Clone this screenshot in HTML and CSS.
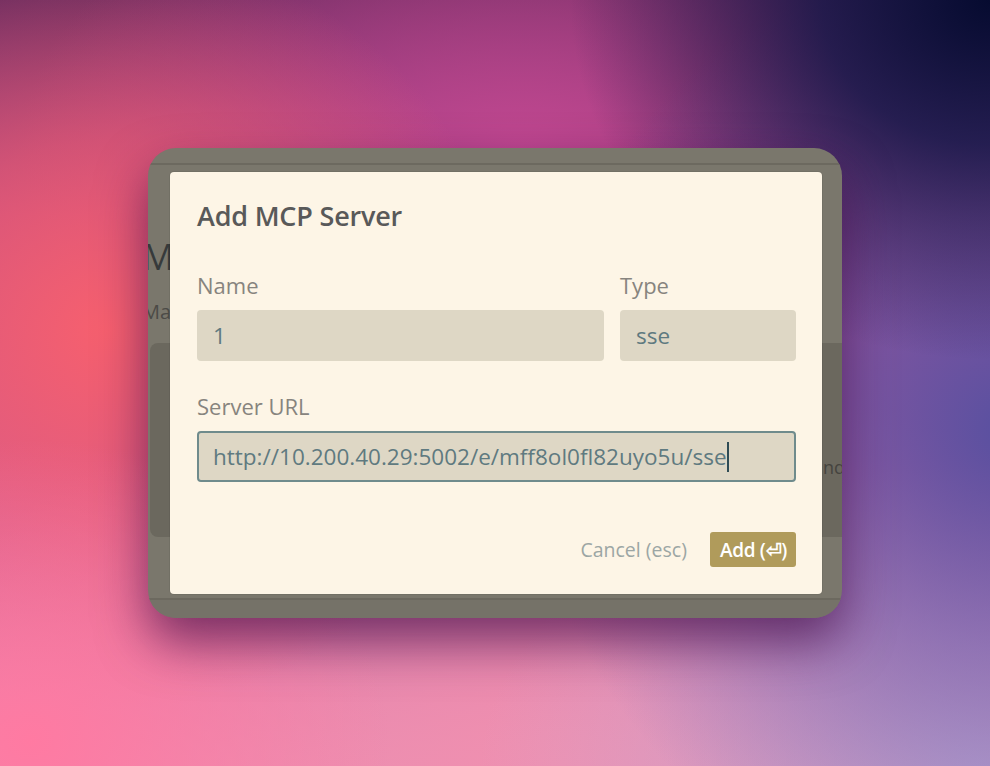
FILE: index.html
```html
<!DOCTYPE html>
<html lang="en">
<head>
<meta charset="utf-8">
<title>Add MCP Server</title>
<link rel="stylesheet" href="styles.css">
</head>
<body>
<div class="stage">
  <div class="frame">
    <div class="app">
      <div class="app-bar"></div>
      <div class="app-body">
        <div class="app-title">MCP Servers</div>
        <div class="app-sub">Manage</div>
        <div class="app-panel"><span class="app-panel-text">Add a server and</span></div>
      </div>
      <div class="app-foot"></div>
    </div>
    <div class="dialog">
      <h1 class="dialog-title">Add MCP Server</h1>
      <div class="row">
        <div class="field field-grow">
          <label class="label">Name</label>
          <div class="input">1</div>
        </div>
        <div class="field field-type">
          <label class="label">Type</label>
          <div class="input">sse</div>
        </div>
      </div>
      <div class="field field-url">
        <label class="label">Server URL</label>
        <div class="input input-focus">http://10.200.40.29:5002/e/mff8ol0fl82uyo5u/sse<span class="caret"></span></div>
      </div>
      <div class="actions">
        <span class="btn-cancel">Cancel (esc)</span>
        <span class="btn-add">Add (⏎)</span>
      </div>
    </div>
  </div>
</div>
</body>
</html>
```
FILE: styles.css
```css
html, body {
  margin: 0;
  padding: 0;
  width: 990px;
  height: 766px;
  overflow: hidden;
}
body {
  font-family: "Open Sans", "Noto Sans", sans-serif;
  background:
    radial-gradient(ellipse 420px 360px at 990px 0px, #060b30 0%, rgba(20,22,70,0.85) 40%, rgba(40,40,110,0) 100%),
    radial-gradient(ellipse 480px 480px at 1010px 430px, #5850a0 0%, rgba(100,90,170,0.6) 45%, rgba(100,90,170,0) 100%),
    radial-gradient(ellipse 500px 300px at 980px 766px, #c6a8d2 0%, rgba(200,160,210,0) 100%),
    radial-gradient(ellipse 360px 300px at 30px 740px, #ff7aa2 0%, rgba(255,120,160,0) 100%),
    radial-gradient(ellipse 400px 380px at 110px 330px, #f7606e 0%, rgba(246,96,112,0.6) 50%, rgba(246,100,118,0) 100%),
    radial-gradient(ellipse 500px 300px at 520px 150px, #c04790 0%, rgba(190,70,140,0) 100%),
    radial-gradient(ellipse 700px 400px at 560px 766px, #f090b0 0%, rgba(230,130,170,0) 100%),
    linear-gradient(180deg, #6a2c60 0%, #ac4588 28%, #c45696 60%, #e68ab0 100%);
}
.stage {
  width: 990px;
  height: 766px;
  display: flex;
  justify-content: center;
  padding-top: 148px;
  box-sizing: border-box;
}
.frame {
  position: relative;
  width: 694px;
  height: 470px;
  border-radius: 28px;
  overflow: hidden;
  background: #7a776c;
  box-shadow: 0 24px 50px rgba(70, 15, 75, 0.7);
}
.app {
  display: flex;
  flex-direction: column;
  height: 100%;
}
.app-bar {
  height: 15px;
  border-bottom: 2px solid #6c695f;
  flex: none;
}
.app-body {
  flex: 1;
  padding: 72px 0 0 0;
  margin-left: -6px;
}
.app-title {
  font-size: 36px;
  color: #363a3b;
  line-height: 40px;
  white-space: nowrap;
}
.app-sub {
  font-size: 20px;
  color: #4c4b47;
  margin-top: 22px;
  line-height: 26px;
  white-space: nowrap;
}
.app-panel {
  margin: 18px 0 0 8px;
  height: 194px;
  background: #6b685e;
  border-radius: 8px 0 0 8px;
  display: flex;
  align-items: flex-start;
  justify-content: flex-end;
  white-space: nowrap;
  overflow: hidden;
}
.app-panel-text {
  font-size: 18px;
  color: #45443f;
  margin-right: -3px;
  margin-top: 112px;
}
.app-foot {
  height: 18px;
  border-top: 2px solid #6c695f;
  background: #757268;
  flex: none;
}
.dialog {
  position: absolute;
  left: 22px;
  top: 24px;
  width: 652px;
  height: 422px;
  box-sizing: border-box;
  background: #fdf5e6;
  border-radius: 4px;
  padding: 28px 26px 27px 27px;
  display: flex;
  flex-direction: column;
  box-shadow: 0 0 0 1px rgba(0,0,0,0.06);
}
.dialog-title {
  margin: 0;
  font-size: 27px;
  font-weight: 600;
  color: #595959;
  line-height: 32px;
  letter-spacing: -0.2px;
}
.row {
  display: flex;
  gap: 16px;
  margin-top: 40px;
}
.field {
  display: flex;
  flex-direction: column;
}
.field-grow {
  flex: 1;
}
.field-type {
  width: 176px;
}
.field-url {
  margin-top: 32px;
}
.label {
  font-size: 22px;
  color: #87847e;
  line-height: 26px;
  margin-bottom: 12px;
}
.input {
  height: 51px;
  box-sizing: border-box;
  background: #ded7c5;
  border-radius: 4px;
  padding: 0 16px;
  display: flex;
  align-items: center;
  font-size: 22.5px;
  color: #5f7a80;
  white-space: nowrap;
}
.input-focus {
  border: 2px solid #6f8b8c;
  padding: 0 14px;
}
.caret {
  display: inline-block;
  width: 2px;
  height: 30px;
  background: #2f4c55;
}
.actions {
  margin-top: auto;
  display: flex;
  justify-content: flex-end;
  align-items: center;
  gap: 23px;
}
.btn-cancel {
  font-size: 19.5px;
  color: #9ca6a4;
}
.btn-add {
  background: #b09b5b;
  color: #ffffff;
  font-weight: 600;
  font-size: 19px;
  height: 35px;
  padding: 0 9px 0 10px;
  border-radius: 3px;
  display: flex;
  align-items: center;
  letter-spacing: -0.3px;
}
```
